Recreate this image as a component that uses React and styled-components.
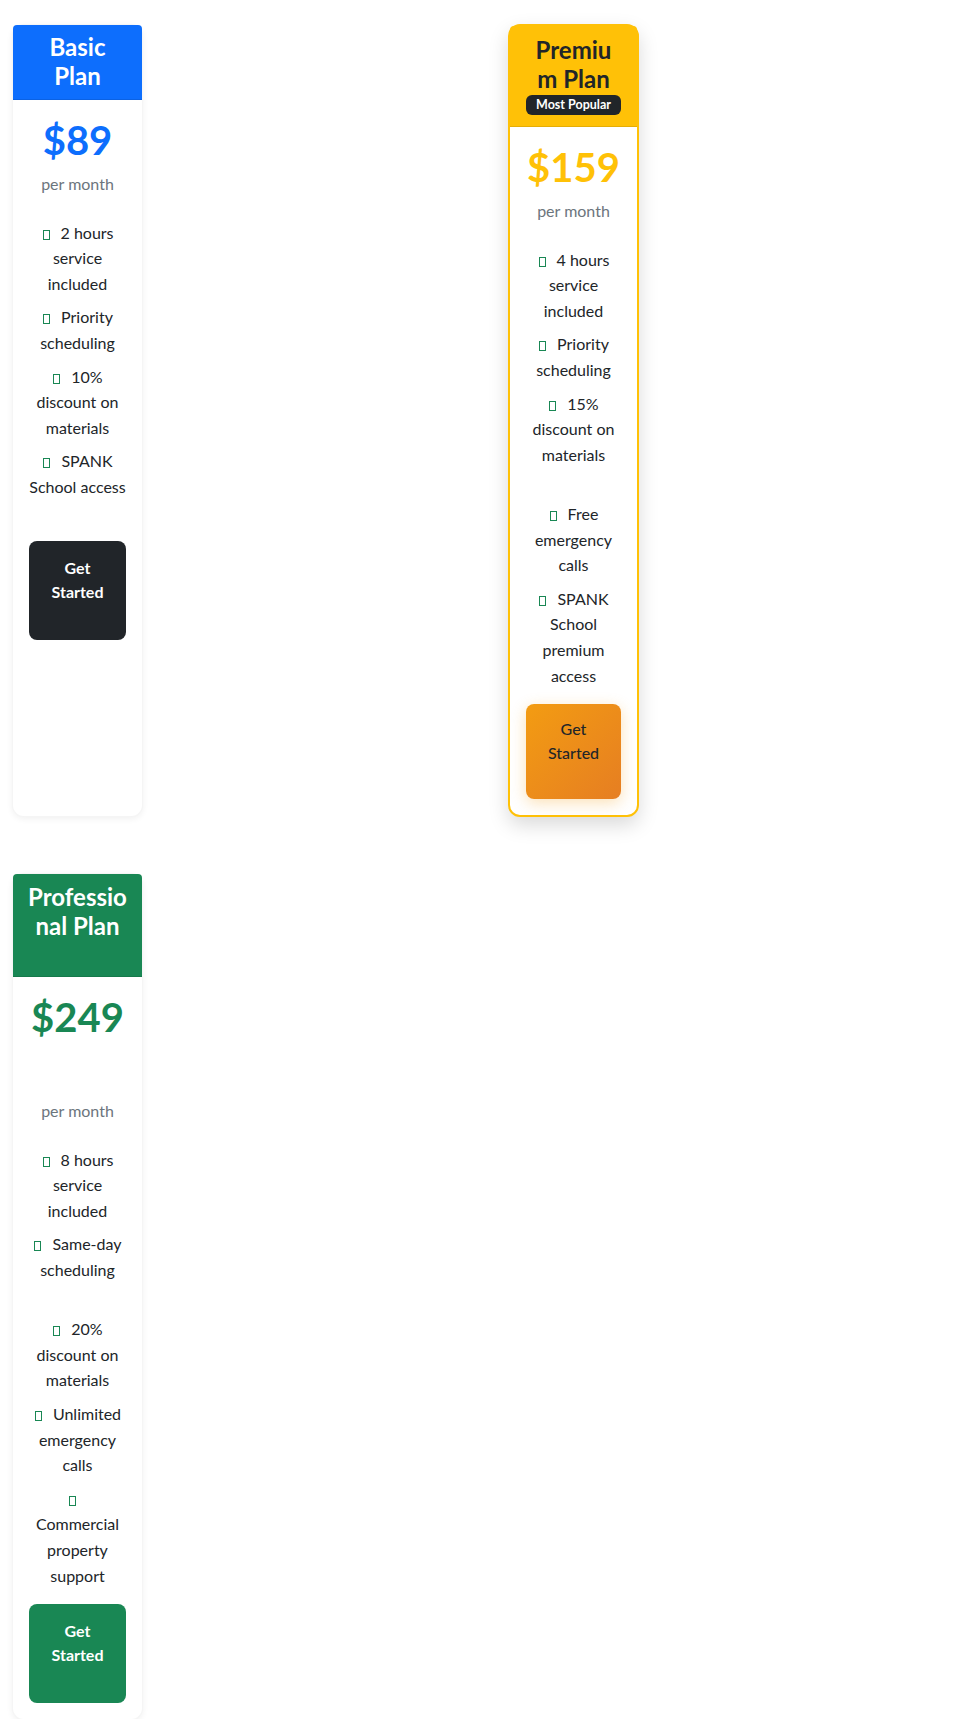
import React from "react";
import styled, { createGlobalStyle } from "styled-components";

const GlobalStyle = createGlobalStyle`
  body {
    margin: 0;
    background: #fff;
    color: #212529;
    font-family: Lato, "Noto Sans", "Liberation Sans", sans-serif;
    font-size: 16px;
    line-height: 1.5;
  }
`;

const Page = styled.div`
  padding: 24px 12px 0;
  display: grid;
  grid-template-columns: repeat(2, 1fr);
  gap: 56px;
`;

const Card = styled.div`
  width: 131px;
  box-sizing: border-box;
  background: #fff;
  border: ${(p) => (p.$featured ? "2px solid #ffc107" : "1px solid rgba(0, 0, 0, 0.04)")};
  border-radius: 12px;
  box-shadow: ${(p) =>
    p.$featured ? "0 8px 20px rgba(0, 0, 0, 0.15)" : "0 2px 6px rgba(0, 0, 0, 0.06)"};
  display: flex;
  flex-direction: column;
  text-align: center;
`;

const Header = styled.div`
  background: ${(p) => p.$bg};
  color: ${(p) => p.$fg};
  padding: ${(p) => p.$pad || "8px 15px"};
  border-radius: 4px 4px 0 0;
  border-bottom: 1px solid rgba(0, 0, 0, 0.1);
`;

const Title = styled.h4`
  margin: 0;
  font-size: 24px;
  line-height: 1.2;
  font-weight: 700;
  overflow-wrap: anywhere;
`;

const Badge = styled.span`
  display: block;
  width: fit-content;
  margin: 1px auto 0;
  padding: 4px 10px;
  font-size: 12.5px;
  line-height: 12px;
  font-weight: 700;
  color: #fff;
  background: #212529;
  border-radius: 6px;
`;

const Body = styled.div`
  padding: 16px;
  flex: 1;
`;

const Price = styled.h2`
  margin: 0 0 ${(p) => p.$mb || "8px"};
  font-size: 40px;
  line-height: 1.2;
  font-weight: 700;
  color: ${(p) => p.$color};
`;

const Period = styled.p`
  margin: 0 0 24px;
  color: #6c757d;
  line-height: 24px;
`;

const Features = styled.ul`
  list-style: none;
  margin: 0;
  padding: 0 0 8px;
`;

const Feature = styled.li`
  line-height: 25.6px;
  margin-bottom: ${(p) => (p.$gap ? "33.6px" : "8px")};
`;

const Check = styled.span`
  display: inline-block;
  width: 7px;
  height: 10px;
  box-sizing: border-box;
  border: 1px solid #198754;
  margin: 0 11px 0 1px;
  vertical-align: -1px;
`;

const Button = styled.a`
  display: block;
  box-sizing: border-box;
  min-height: ${(p) => (p.$featured ? "95px" : "99px")};
  padding: ${(p) => (p.$featured ? "13px 20px" : "15px 22px")};
  border-radius: 8px;
  font-size: 16px;
  line-height: 24px;
  font-weight: ${(p) => (p.$featured ? 500 : 700)};
  text-decoration: none;
  color: ${(p) => p.$fg};
  background: ${(p) => p.$bg};
  box-shadow: ${(p) => (p.$featured ? "0 4px 15px rgba(243, 156, 18, 0.3)" : "none")};
`;

const plans = [
  {
    name: "Basic Plan",
    price: "$89",
    color: "#0d6efd",
    fg: "#fff",
    features: [
      { text: "2 hours service included" },
      { text: "Priority scheduling" },
      { text: "10% discount on materials" },
      { text: "SPANK School access", gap: true },
    ],
    button: { bg: "#212529", fg: "#fff" },
  },
  {
    name: "Premium Plan",
    price: "$159",
    color: "#ffc107",
    fg: "#212529",
    featured: true,
    pad: "10px 16px 11px",
    features: [
      { text: "4 hours service included" },
      { text: "Priority scheduling" },
      { text: "15% discount on materials", gap: true },
      { text: "Free emergency calls" },
      { text: "SPANK School premium access" },
    ],
    button: { bg: "linear-gradient(135deg, #f39c12, #e67e22)", fg: "#212529" },
  },
  {
    name: "Professional Plan",
    price: "$249",
    color: "#198754",
    fg: "#fff",
    pad: "9px 15px 35px",
    priceMb: "58px",
    features: [
      { text: "8 hours service included" },
      { text: "Same-day scheduling", gap: true },
      { text: "20% discount on materials" },
      { text: "Unlimited emergency calls" },
      { text: "Commercial property support" },
    ],
    button: { bg: "#198754", fg: "#fff" },
  },
];

function PlanCard({ plan }) {
  return (
    <Card $featured={plan.featured}>
      <Header $bg={plan.color} $fg={plan.fg} $pad={plan.pad}>
        <Title>{plan.name}</Title>
        {plan.featured && <Badge>Most Popular</Badge>}
      </Header>
      <Body>
        <Price $color={plan.color} $mb={plan.priceMb}>
          {plan.price}
        </Price>
        <Period>per month</Period>
        <Features>
          {plan.features.map((f) => (
            <Feature key={f.text} $gap={f.gap}>
              <Check />
              {f.text}
            </Feature>
          ))}
        </Features>
        <Button href="#" $featured={plan.featured} $bg={plan.button.bg} $fg={plan.button.fg}>
          Get Started
        </Button>
      </Body>
    </Card>
  );
}

export default function App() {
  return (
    <>
      <GlobalStyle />
      <Page>
        {plans.map((p) => (
          <PlanCard key={p.name} plan={p} />
        ))}
      </Page>
    </>
  );
}
